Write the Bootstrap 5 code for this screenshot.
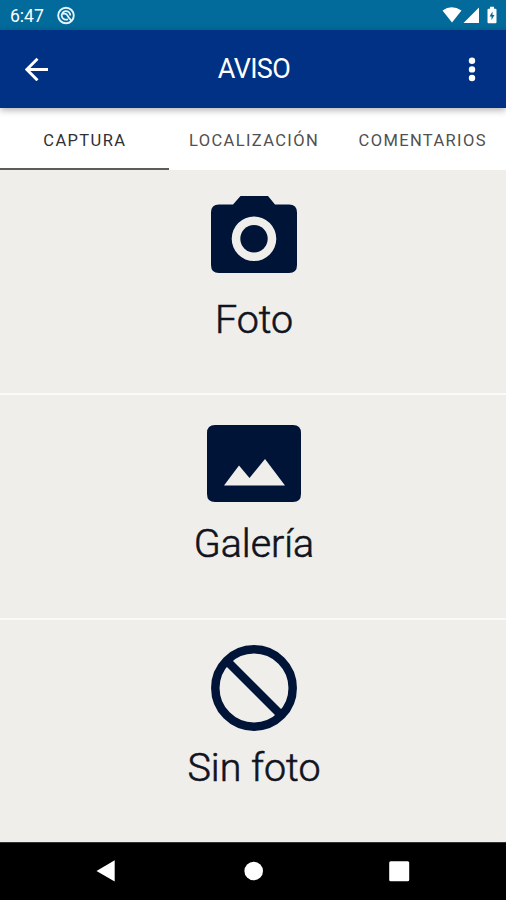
<!DOCTYPE html>
<html lang="es">
<head>
<meta charset="utf-8">
<meta name="viewport" content="width=device-width, initial-scale=1">
<title>Aviso</title>
<link href="https://cdn.jsdelivr.net/npm/bootstrap@5.3.0/dist/css/bootstrap.min.css" rel="stylesheet">
<style>
body{font-family:Roboto,"Liberation Sans",sans-serif;background:#efeeea;height:900px;overflow:hidden}
svg{display:block;flex:none}
.status{height:30px;background:#026b9b;font-size:17.5px;line-height:30px;padding:1px 9px 0 10px}
.appbar{height:78px;background:#003184;box-shadow:0 2px 7px rgba(0,0,0,.32);padding:0 25px 0 25px;z-index:2}
.appbar h1{font-size:27px;line-height:32px;letter-spacing:-.65px;padding-right:3px}
.tabs{height:62px}
.tabs .nav-link{height:62px;padding:3px 0 0 2px;line-height:59px;font-size:16.5px;letter-spacing:1.37px;color:#505050;white-space:nowrap}
.tabs .nav-link.active{color:#303033;padding-left:1px;box-shadow:inset 0 -2px #5c5c5c}
.choice{height:223px;border:0;background:none;color:#11131f;font-size:39.4px;line-height:48px;padding:26px 0 0 2px}
.choice + .choice{height:224.500px;border-top:2px solid #fafaf8}
.choice + .choice + .choice{padding-top:25px}
.choice svg{fill:#001437}
.choice span{font-weight:300;-webkit-text-stroke:.6px #11131f}
.choice .gap-photo{margin-top:23px}
.choice .gap-gallery{margin-top:18px}
.choice .gap-none{margin-top:13px}
.sysnav{height:58px;background:#000;border-top:1px solid #333}
</style>
<script src="https://cdn.jsdelivr.net/npm/bootstrap@5.3.0/dist/js/bootstrap.bundle.min.js"></script>
</head>
<body class="d-flex flex-column m-0">
<div class="status d-flex align-items-center text-white flex-shrink-0">
  <span>6:47</span>
  <svg class="ms-2 me-auto" width="30" height="20" viewBox="0 0 30 20" fill="none" stroke="#e4f4fa"><circle cx="14" cy="9.500" r="7.800" stroke-width="1.900"/><path d="M16 13.200A4.300 4.300 0 1 1 18.300 9.500M10.500 8q4-1.500 5.500 2.500L19.500 15" stroke-width="1.800"/></svg>
  <svg width="56" height="20" viewBox="0 0 56 20" fill="#fff"><path d="M1.500 4.500Q10.500-2 20.500 4.500L11 16.500ZM38 1.500V17H22.500ZM49 .700h4v2h1.500q1 0 1 1V16.200q0 1-1 1h-7q-1 0-1-1V3.700q0-1 1-1H49Z"/><path d="M51.500 5.500L48.500 10.500H50.500V14L53.500 9H51.500Z" fill="#026b9b"/></svg>
</div>
<header class="appbar d-flex align-items-center justify-content-between text-white position-relative flex-shrink-0">
  <svg width="24" height="24" viewBox="0 0 24 24" fill="none" stroke="#fff" stroke-width="2.900"><path d="M23 12.500H2M12.500 1.700L1.800 12.500l10.700 10.800"/></svg>
  <h1 class="m-0 fw-normal">AVISO</h1>
  <svg width="19" height="26" viewBox="0 0 19 26" fill="#fff"><circle cx="10" cy="4.700" r="3.200"/><circle cx="10" cy="13.400" r="3.200"/><circle cx="10" cy="22" r="3.200"/></svg>
</header>
<nav class="tabs nav nav-fill bg-white flex-nowrap flex-shrink-0 row g-0">
  <a class="nav-link active col-4" href="#">CAPTURA</a>
  <a class="nav-link col-4" href="#">LOCALIZACIÓN</a>
  <a class="nav-link col-4" href="#">COMENTARIOS</a>
</nav>
<main class="d-flex flex-column flex-grow-1 overflow-hidden">
  <button class="choice d-flex flex-column align-items-center flex-shrink-0">
    <svg width="86" height="77" viewBox="0 0 86 77"><path fill-rule="evenodd" d="M29.500 0H57L64 8.500H78Q86 8.500 86 16.500V69Q86 77 78 77H8Q0 77 0 69V16.500Q0 8.500 8 8.500H22ZM43 20.500a22.300 22.300 0 1 0 0 44.600a22.300 22.300 0 1 0 0-44.600Z"/><circle cx="43" cy="42.800" r="13.700"/></svg>
    <span class="gap-photo">Foto</span>
  </button>
  <button class="choice d-flex flex-column align-items-center flex-shrink-0">
    <svg class="mt-1" width="94" height="77" viewBox="0 0 94 77"><path fill-rule="evenodd" d="M8 0H86Q94 0 94 8V69Q94 77 86 77H8Q0 77 0 69V8Q0 0 8 0ZM17 60.500H78L58 34L42.500 53L32 40.500Z"/></svg>
    <span class="gap-gallery">Galería</span>
  </button>
  <button class="choice d-flex flex-column align-items-center flex-shrink-0">
    <svg width="86" height="86" viewBox="0 0 86 86"><path fill="none" stroke="#001437" stroke-width="8.500" d="M4.300 43a38.700 38.700 0 1 0 77.400 0a38.700 38.700 0 1 0-77.400 0M16 16L70 70"/></svg>
    <span class="gap-none">Sin foto</span>
  </button>
</main>
<footer class="sysnav flex-shrink-0">
  <svg width="506" height="57" viewBox="0 0 506 57" fill="#fff"><path d="M96.500 28L114.700 17.300V38.600Z"/><circle cx="253.700" cy="28" r="9.300"/><rect x="389.200" y="18.200" width="20" height="20" rx="1.500"/></svg>
</footer>
</body>
</html>
